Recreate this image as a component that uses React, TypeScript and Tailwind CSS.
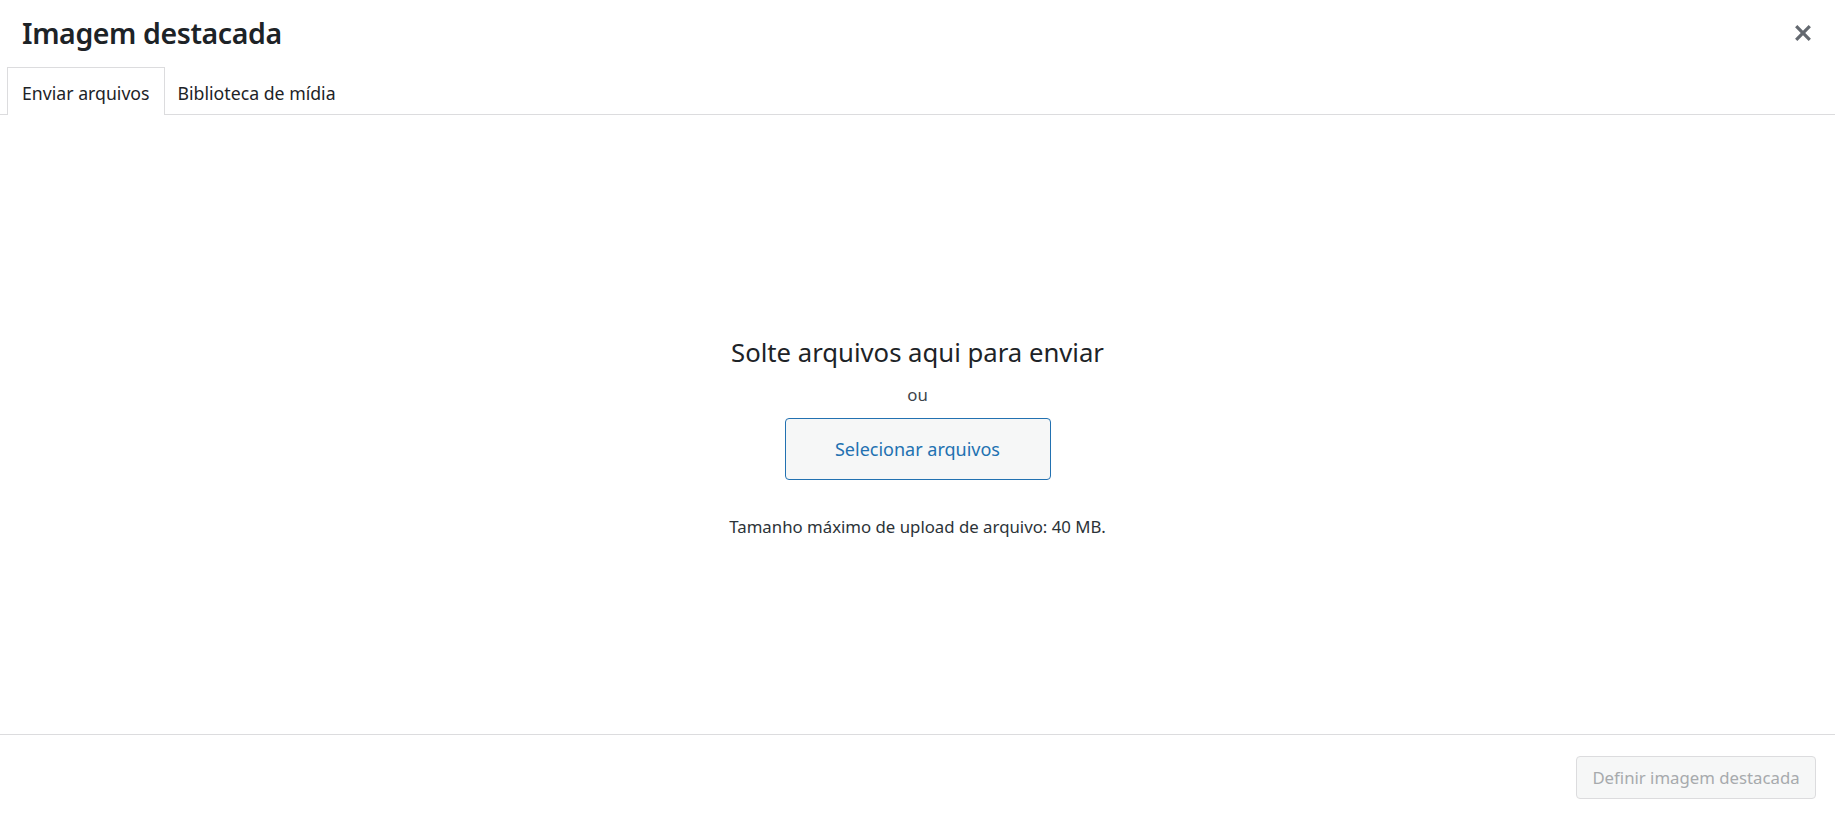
import React from "react";

export default function App() {
  const font = { fontFamily: '"Noto Sans", "Open Sans", sans-serif' };
  return (
    <div
      className="relative flex h-[816px] w-full flex-col bg-white text-[#1d2327]"
      style={font}
    >
      <div className="px-[22px] pt-[18px]">
        <h1 className="text-[28.5px] font-semibold leading-[30px] tracking-[-0.4px] text-[#1d2327]">
          Imagem destacada
        </h1>
      </div>
      <button className="absolute right-[16px] top-[17px] flex h-[32px] w-[32px] items-center justify-center">
        <svg viewBox="0 0 20 20" className="h-[32px] w-[32px] fill-[#646970]">
          <path d="M14.95 6.46L11.41 10l3.54 3.54l-1.41 1.41L10 11.42l-3.53 3.53l-1.42-1.42L8.58 10L5.05 6.47l1.42-1.42L10 8.58l3.54-3.53z" />
        </svg>
      </button>

      <div className="mt-[19px] flex border-b border-[#dcdcde] pl-[7px]">
        <div className="-mb-px h-[48px] border border-b-0 border-[#dcdcde] bg-white px-[14px] pt-[13px] text-[17.7px] leading-[24px] text-[#1d2327]">
          Enviar arquivos
        </div>
        <div className="-mb-px h-[48px] border border-transparent px-[12px] pt-[13px] text-[17.7px] leading-[24px] text-[#1d2327]">
          Biblioteca de mídia
        </div>
      </div>

      <div className="flex flex-1 flex-col items-center pt-[220px]">
        <h2 className="text-[25.7px] font-normal leading-[36px] text-[#1d2327]">
          Solte arquivos aqui para enviar
        </h2>
        <p className="mt-[12px] text-[16.8px] leading-[24px] text-[#3c434a]">ou</p>
        <button className="mt-[11px] flex h-[62px] w-[266px] items-center justify-center rounded-[4px] border border-[#2271b1] bg-[#f6f7f7] text-[18px] text-[#2271b1]">
          Selecionar arquivos
        </button>
        <p className="mt-[35px] text-[16.8px] leading-[24px] text-[#2c3338]">
          Tamanho máximo de upload de arquivo: 40 MB.
        </p>
      </div>

      <div className="flex h-[82px] justify-end border-t border-[#dcdcde] pr-[19px] pt-[21px]">
        <button className="h-[43px] w-[240px] rounded-[4px] border border-[#dcdcde] bg-[#f6f7f7] text-[16.75px] text-[#a7aaad]">
          Definir imagem destacada
        </button>
      </div>
    </div>
  );
}
